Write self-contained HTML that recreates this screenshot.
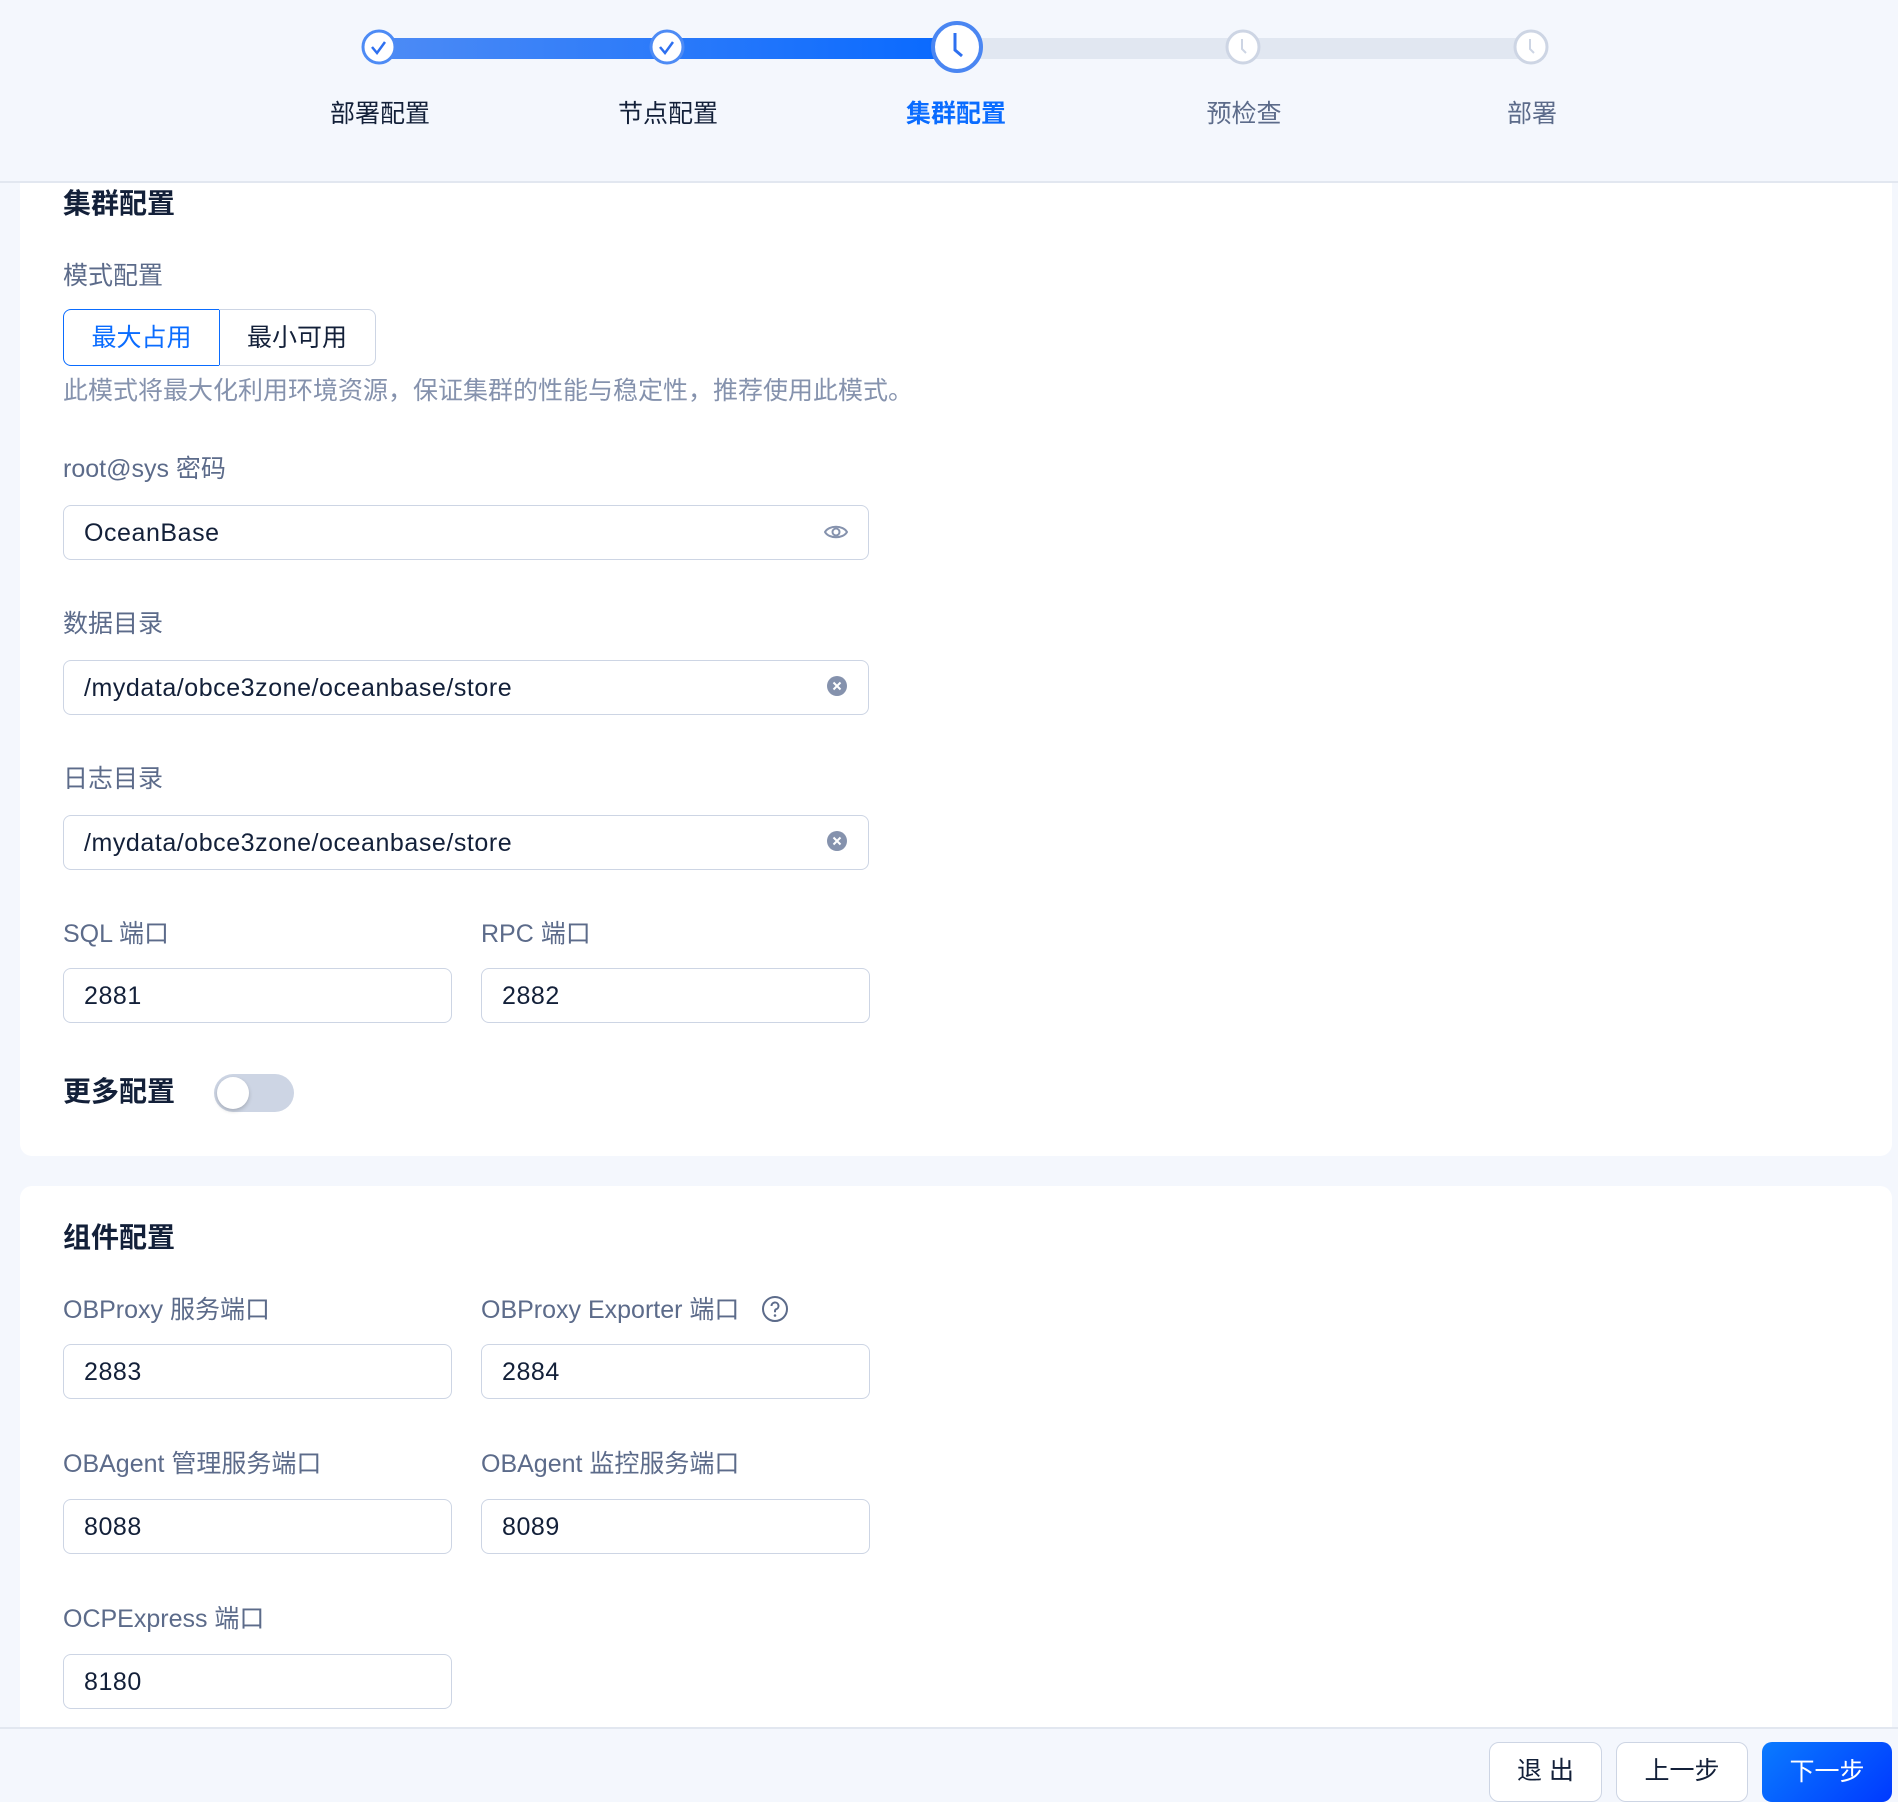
<!DOCTYPE html>
<html><head><meta charset="utf-8"><style>
*{box-sizing:border-box;margin:0;padding:0}
body{width:1898px;height:1796px;background:#f4f7fd;font-family:"Liberation Sans","Noto Sans CJK SC",sans-serif;position:relative;overflow:hidden;color:#132039}
.a{position:absolute}
.hdr{left:0;top:0;width:1898px;height:183px;background:#f4f7fd;border-bottom:2px solid #e2e7f0;z-index:2}
.card{background:#fff;border-radius:12px}
.lbl{font-size:25px;color:#5c6b8a;line-height:1}
.ttl{font-size:28px;font-weight:bold;color:#132039;line-height:1}
.inp{height:55px;border:1.5px solid #cdd5e4;border-radius:8px;background:#fff;font-size:25px;color:#132039;padding-left:20px;line-height:54px;letter-spacing:0.55px}
.step{font-size:25px;line-height:1;transform:translateX(-50%)}
.btn{height:60px;border:1.5px solid #cdd5e4;border-radius:10px;background:#fff;font-size:25px;text-align:center;line-height:56px;color:#132039}
</style></head><body>
<div class="a hdr">
  <div class="a" style="left:379px;top:38px;width:578px;height:21px;background:linear-gradient(90deg,#4d8bf5,#0869ff)"></div>
  <div class="a" style="left:957px;top:38px;width:574px;height:21px;background:#e1e7f1"></div>
  <svg class="a" style="left:361px;top:29px" width="36" height="36"><circle cx="18" cy="18" r="16" fill="#fff" stroke="#4d8bf5" stroke-width="3"/><path d="M11 18l5 6 8-11" fill="none" stroke="#2e70f0" stroke-width="2.5"/></svg>
  <svg class="a" style="left:649px;top:29px" width="36" height="36"><circle cx="18" cy="18" r="16" fill="#fff" stroke="#4d8bf5" stroke-width="3"/><path d="M11 18l5 6 8-11" fill="none" stroke="#2e70f0" stroke-width="2.5"/></svg>
  <svg class="a" style="left:930px;top:20px" width="54" height="54"><circle cx="27" cy="27" r="24" fill="#fff" stroke="#4a86f2" stroke-width="4"/><path d="M25 13v17l7 6" fill="none" stroke="#2e70f0" stroke-width="3"/></svg>
  <svg class="a" style="left:1225px;top:29px" width="36" height="36"><circle cx="18" cy="18" r="16" fill="#fff" stroke="#cdd5e4" stroke-width="3"/><path d="M17 10v10l4 4" fill="none" stroke="#cdd5e4" stroke-width="2"/></svg>
  <svg class="a" style="left:1513px;top:29px" width="36" height="36"><circle cx="18" cy="18" r="16" fill="#fff" stroke="#cdd5e4" stroke-width="3"/><path d="M17 10v10l4 4" fill="none" stroke="#cdd5e4" stroke-width="2"/></svg>
  <div class="a step" style="left:380px;top:102px">部署配置</div>
  <div class="a step" style="left:668px;top:102px">节点配置</div>
  <div class="a step" style="left:956px;top:102px;color:#0a6cff;font-weight:bold">集群配置</div>
  <div class="a step" style="left:1244px;top:102px;color:#5c6b8a">预检查</div>
  <div class="a step" style="left:1532px;top:102px;color:#5c6b8a">部署</div>
</div>

<div class="a card" style="left:20px;top:160px;width:1872px;height:996px"></div>
<div class="a ttl" style="left:63px;top:190px">集群配置</div>
<div class="a lbl" style="left:63px;top:264px">模式配置</div>
<div class="a" style="left:63px;top:309px;width:157px;height:57px;border:1.5px solid #0a6cff;border-radius:8px 0 0 8px;color:#0a6cff;font-size:25px;text-align:center;line-height:56px">最大占用</div>
<div class="a" style="left:219px;top:309px;width:157px;height:57px;border:1.5px solid #cdd5e4;border-left:none;border-radius:0 8px 8px 0;font-size:25px;text-align:center;line-height:56px">最小可用</div>
<div class="a lbl" style="left:63px;top:379px;color:#8592ad">此模式将最大化利用环境资源，保证集群的性能与稳定性，推荐使用此模式。</div>
<div class="a lbl" style="left:63px;top:457px">root@sys 密码</div>
<div class="a inp" style="left:63px;top:505px;width:806px">OceanBase
  <svg class="a" style="right:20px;top:16px" width="24" height="20"><path d="M1 10C5 3 19 3 23 10C19 17 5 17 1 10Z" fill="none" stroke="#8592ad" stroke-width="2"/><circle cx="12" cy="10" r="3.5" fill="none" stroke="#8592ad" stroke-width="2"/></svg>
</div>
<div class="a lbl" style="left:63px;top:612px">数据目录</div>
<div class="a inp" style="left:63px;top:660px;width:806px">/mydata/obce3zone/oceanbase/store
  <svg class="a" style="right:20px;top:14px" width="22" height="22"><circle cx="11" cy="11" r="10" fill="#8592ad"/><path d="M7.5 7.5l7 7M14.5 7.5l-7 7" stroke="#fff" stroke-width="2"/></svg>
</div>
<div class="a lbl" style="left:63px;top:767px">日志目录</div>
<div class="a inp" style="left:63px;top:815px;width:806px">/mydata/obce3zone/oceanbase/store
  <svg class="a" style="right:20px;top:14px" width="22" height="22"><circle cx="11" cy="11" r="10" fill="#8592ad"/><path d="M7.5 7.5l7 7M14.5 7.5l-7 7" stroke="#fff" stroke-width="2"/></svg>
</div>
<div class="a lbl" style="left:63px;top:922px">SQL 端口</div>
<div class="a lbl" style="left:481px;top:922px">RPC 端口</div>
<div class="a inp" style="left:63px;top:968px;width:389px">2881</div>
<div class="a inp" style="left:481px;top:968px;width:389px">2882</div>
<div class="a ttl" style="left:63px;top:1078px">更多配置</div>
<div class="a" style="left:214px;top:1074px;width:80px;height:38px;border-radius:19px;background:#cdd5e4"></div>
<div class="a" style="left:217px;top:1077px;width:32px;height:32px;border-radius:50%;background:#fff;box-shadow:0 2px 4px rgba(0,0,0,.2)"></div>

<div class="a card" style="left:20px;top:1186px;width:1872px;height:600px"></div>
<div class="a ttl" style="left:63px;top:1224px">组件配置</div>
<div class="a lbl" style="left:63px;top:1298px">OBProxy 服务端口</div>
<div class="a lbl" style="left:481px;top:1298px">OBProxy Exporter 端口</div>
<svg class="a" style="left:761px;top:1295px" width="28" height="28"><circle cx="14" cy="14" r="12" fill="none" stroke="#5c6b8a" stroke-width="2"/><path d="M10.5 11a3.5 3.5 0 1 1 4.5 3.3c-.8.3-1 1-1 2v1" fill="none" stroke="#5c6b8a" stroke-width="2"/><circle cx="14" cy="20.5" r="1.3" fill="#5c6b8a"/></svg>
<div class="a inp" style="left:63px;top:1344px;width:389px">2883</div>
<div class="a inp" style="left:481px;top:1344px;width:389px">2884</div>
<div class="a lbl" style="left:63px;top:1452px">OBAgent 管理服务端口</div>
<div class="a lbl" style="left:481px;top:1452px">OBAgent 监控服务端口</div>
<div class="a inp" style="left:63px;top:1499px;width:389px">8088</div>
<div class="a inp" style="left:481px;top:1499px;width:389px">8089</div>
<div class="a lbl" style="left:63px;top:1607px">OCPExpress 端口</div>
<div class="a inp" style="left:63px;top:1654px;width:389px">8180</div>

<div class="a" style="left:0;top:1727px;width:1898px;height:69px;background:#f4f7fd;border-top:2px solid #e2e7f0"></div>
<div class="a btn" style="left:1489px;top:1742px;width:113px">退 出</div>
<div class="a btn" style="left:1616px;top:1742px;width:132px">上一步</div>
<div class="a btn" style="left:1762px;top:1742px;width:130px;border:none;background:linear-gradient(135deg,#0a7bff,#0039ff);color:#fff;line-height:60px">下一步</div>
</body></html>
